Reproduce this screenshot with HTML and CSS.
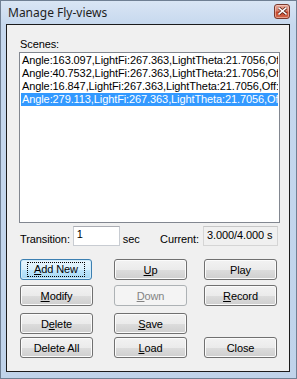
FILE: index.html
```html
<!DOCTYPE html>
<html lang="en">

<head>
    <meta charset="UTF-8">
    <meta name="viewport" content="width=device-width, initial-scale=1.0">
    <title>Manage Fly-views</title>
    <link rel="stylesheet" href="styles.css">
</head>

<body>
    <div class="window">
        <div class="titlebar">
            <span class="title">Manage Fly-views</span>
            <button class="close-btn" aria-label="Close">
                <svg width="9" height="8" viewBox="0 0 9 8">
                    <path d="M1 1 L8 7 M8 1 L1 7" stroke="#5a1d12" stroke-width="3" stroke-linecap="square" />
                    <path d="M1 1 L8 7 M8 1 L1 7" stroke="#fff" stroke-width="1.6" stroke-linecap="square" />
                </svg>
            </button>
        </div>

        <div class="client">
            <div class="scenes-label">Scenes:</div>
            <ul class="listbox">
                <li>Angle:163.097,LightFi:267.363,LightTheta:21.7056,Off:0.000</li>
                <li>Angle:40.7532,LightFi:267.363,LightTheta:21.7056,Off:0.000</li>
                <li>Angle:16.847,LightFi:267.363,LightTheta:21.7056,Off:0.000</li>
                <li class="selected">Angle:279.113,LightFi:267.363,LightTheta:21.7056,Off:0.000</li>
            </ul>

            <div class="time-row">
                <label for="transition" class="lbl-transition">Transition:</label>
                <input id="transition" class="edit" type="text" value="1" />
                <span class="lbl-sec">sec</span>
                <span class="lbl-current">Current:</span>
                <span class="readonly">3.000/4.000 s</span>
            </div>

            <div class="buttons">
                <button class="btn focused"><span class="focus-rect"><u>A</u>dd New</span></button>
                <button class="btn"><u>U</u>p</button>
                <button class="btn">Play</button>

                <button class="btn row2"><u>M</u>odify</button>
                <button class="btn row2" disabled><u>D</u>own</button>
                <button class="btn row2"><u>R</u>ecord</button>

                <button class="btn row3">D<u>e</u>lete</button>
                <button class="btn row3"><u>S</u>ave</button>
                <span></span>

                <button class="btn row4">Delete All</button>
                <button class="btn row4"><u>L</u>oad</button>
                <button class="btn row4">Close</button>
            </div>
        </div>
    </div>
</body>

</html>
```

FILE: styles.css
```css
body {
    margin: 0;
    font-family: 'Liberation Sans', Arial, sans-serif;
    font-size: 11px;
    letter-spacing: -0.1px;
    color: #000;
}

.window {
    box-sizing: border-box;
    width: 297px;
    height: 379px;
    border: 1px solid #6f7f93;
    background: linear-gradient(to bottom, #d9e5f4 0px, #c6d8ee 24px, #c0d3ea 100%);
    display: flex;
    flex-direction: column;
}

.titlebar {
    height: 23px;
    display: flex;
    align-items: center;
    justify-content: space-between;
    padding: 0 6px 0 7px;
}

.title {
    font-family: 'Noto Sans', sans-serif;
    font-size: 12px;
    letter-spacing: 0;
    color: #1e1e1e;
    margin-top: -1px;
}

.close-btn {
    width: 16px;
    height: 15px;
    margin-top: -3px;
    padding: 0;
    border: 1px solid #7a3a2e;
    border-radius: 3px;
    background: linear-gradient(to bottom, #e9a99a 0%, #d7806c 45%, #c5472c 55%, #d0674b 100%);
    display: flex;
    align-items: center;
    justify-content: center;
    box-shadow: inset 0 0 0 1px rgba(255, 220, 210, 0.5);
}

.client {
    margin: 0 6px 6px 5px;
    flex: 1;
    border: 1px solid #1b1b1b;
    background: #f0f0f0;
    padding: 0 11px 0 12px;
}

.scenes-label {
    margin: 12px 0 0 1px;
    line-height: 14px;
}

.listbox {
    list-style: none;
    margin: 1px 0 0;
    padding: 1px 1px;
    height: 167px;
    width: 257px;
    background: #fff;
    border: 1px solid #828790;
    overflow: hidden;
}

.listbox li {
    height: 13px;
    line-height: 13px;
    padding-left: 1px;
    white-space: nowrap;
    overflow: hidden;
}

.listbox .selected {
    background: #3399ff;
    color: #fff;
}

.time-row {
    display: flex;
    align-items: center;
    margin-top: 3px;
    height: 20px;
}

.lbl-transition {
    margin-left: 1px;
    margin-right: 3px;
    padding-top: 6px;
}

.edit {
    box-sizing: border-box;
    width: 47px;
    height: 20px;
    margin: 0;
    padding: 0 3px 5px;
    border: 1px solid #c8ccd2;
    border-top-color: #abadb3;
    font-family: inherit;
    font-size: 11px;
    background: #fff;
}

.lbl-sec {
    margin-left: 3px;
    padding-top: 6px;
}

.lbl-current {
    margin-left: auto;
    margin-right: 4px;
    padding-top: 6px;
}

.readonly {
    box-sizing: border-box;
    width: 75px;
    height: 20px;
    padding: 2px 0 0 3px;
    border: 1px solid #d5d5d5;
    border-top-color: #c6c6c6;
    background: #f0f0f0;
    white-space: nowrap;
    overflow: hidden;
}

.buttons {
    display: grid;
    grid-template-columns: 94px 90px 73px;
    margin-top: 13px;
    margin-left: 1px;
}

.btn {
    box-sizing: border-box;
    width: 73px;
    height: 21px;
    margin: 0;
    padding: 0;
    font-family: inherit;
    font-size: 11px;
    font-weight: normal;
    letter-spacing: -0.1px;
    color: #000;
    border: 1px solid #707070;
    border-radius: 3px;
    background: linear-gradient(to bottom, #f2f2f2 0%, #ebebeb 50%, #dddddd 51%, #cfcfcf 100%);
    box-shadow: inset 0 0 0 1px #fbfbfb;
}

.btn.row2 {
    margin-top: 5px;
}

.btn.row3 {
    margin-top: 7px;
}

.btn.row4 {
    margin-top: 3px;
}

.btn.focused {
    width: 72px;
    border-color: #3c7fb1;
    background: linear-gradient(to bottom, #eaf6fd 0%, #d9f0fc 50%, #bee6fd 51%, #a7d9f5 100%);
    box-shadow: inset 0 0 0 1px #d2ecfa;
}

.focus-rect {
    display: inline-block;
    outline: 1px dotted #000;
    padding: 0 4px;
    width: 56px;
    box-sizing: border-box;
    line-height: 13px;
}

.btn:disabled {
    color: #838383;
    border-color: #adb2b5;
    background: #f4f4f4;
    box-shadow: none;
}
```
